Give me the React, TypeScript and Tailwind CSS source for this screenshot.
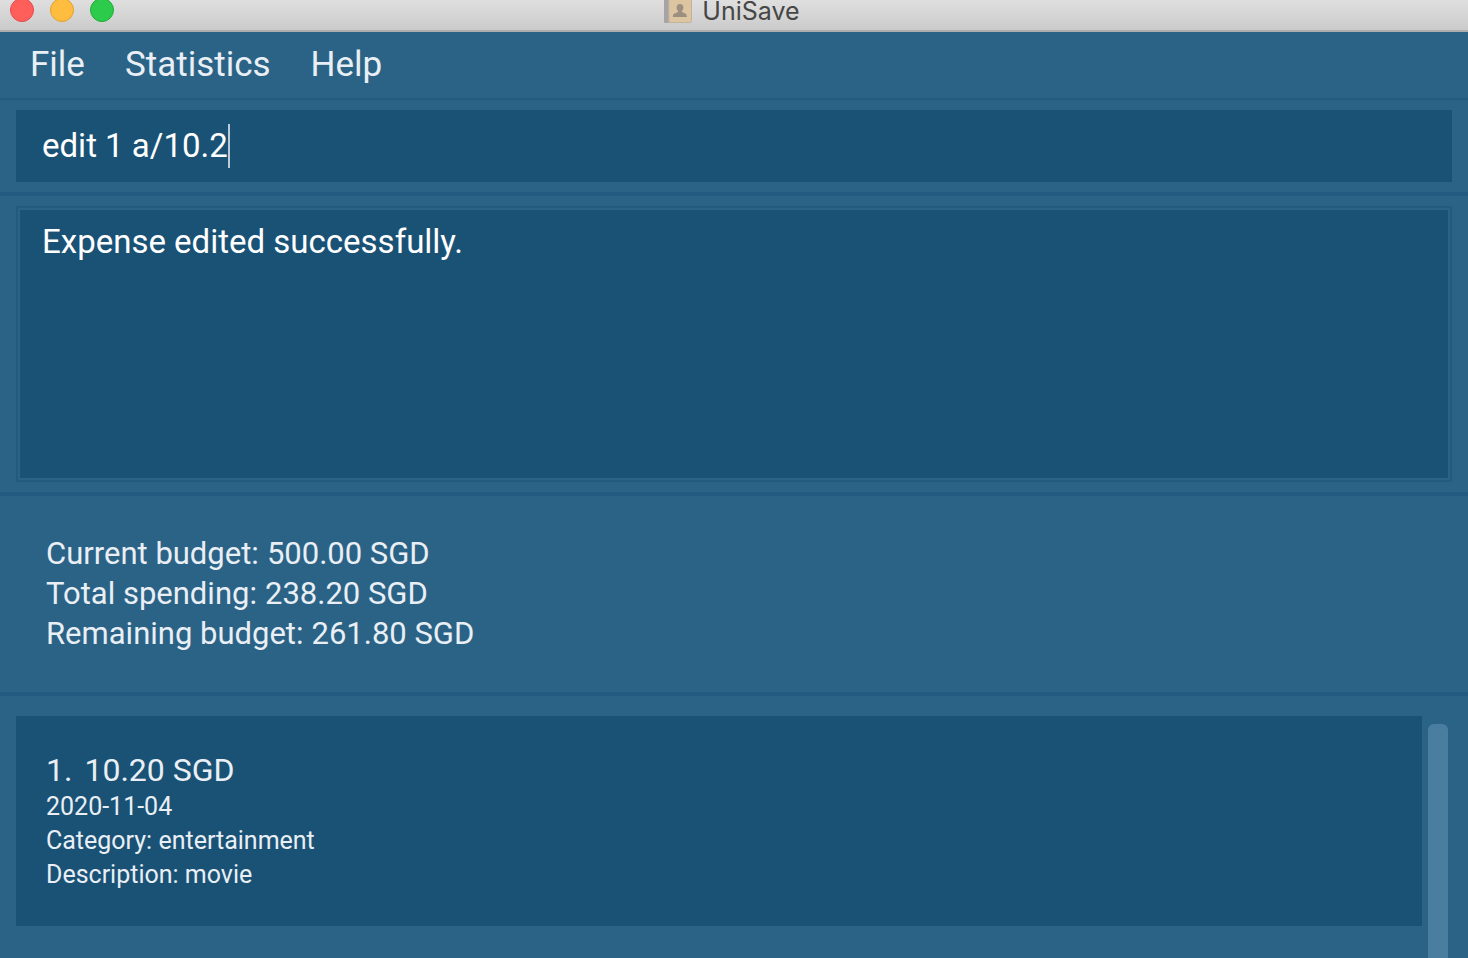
import React, { useState } from "react";

const MENUS = ["File", "Statistics", "Help"];

const BUDGET = [
  { label: "Current budget", amount: "500.00 SGD" },
  { label: "Total spending", amount: "238.20 SGD" },
  { label: "Remaining budget", amount: "261.80 SGD" },
];

const EXPENSES = [
  {
    amount: "10.20 SGD",
    date: "2020-11-04",
    category: "entertainment",
    description: "movie",
  },
];

function AddressBookIcon() {
  return (
    <svg viewBox="0 0 28 24" className="h-6 w-7" aria-hidden="true">
      <rect x="0.5" y="-6" width="27" height="28.500" rx="1.5" fill="#dcc5a0" stroke="#c2b39b" />
      <rect x="0" y="-6" width="5" height="29" rx="1" fill="#a8a3a3" />
      <rect x="4.5" y="-6" width="1" height="28.500" fill="#c4b8a8" />
      <path
        d="M16 4c-2.200 0-3.400 1.600-3.400 3.600 0 1.500.6 2.700 1.500 3.500 0 1-.5 1.300-1.700 1.700C10.400 13.400 9 13.900 8.800 17h14.200c-.2-3.100-1.600-3.600-3.400-4.200-1.200-.4-1.700-.7-1.700-1.700.9-.8 1.500-2 1.500-3.500C19.400 5.600 18.200 4 16 4z"
        fill="#9d8f7f"
      />
    </svg>
  );
}

function TitleBar() {
  return (
    <header className="relative flex h-8 items-start justify-center border-b-2 border-[#aeaeae] bg-linear-to-b from-[#dfdfdf] to-[#cbcbcb]">
      <div className="absolute -top-0.5 left-2.5 flex gap-4">
        <button aria-label="Close" className="size-6 rounded-full border border-[#e8484a] bg-[#ff5f5b]" />
        <button aria-label="Minimize" className="size-6 rounded-full border border-[#e2a02f] bg-[#ffbd3f]" />
        <button aria-label="Zoom" className="size-6 rounded-full border border-[#1fac35] bg-[#2ccb4b]" />
      </div>
      <div className="flex items-start gap-2.5 pr-1">
        <AddressBookIcon />
        <h1 className="font-['Inter','Liberation_Sans',sans-serif] text-[25px] leading-[22px] text-[#464646]">UniSave</h1>
      </div>
    </header>
  );
}

function CommandBox() {
  const [command, setCommand] = useState("edit 1 a/10.2");
  return (
    <div className="border-b-4 border-[#235a80] px-4 py-2.5">
      <label className="flex h-18 items-center bg-[#1a5276] pl-[26px]">
        <input
          aria-label="Command"
          value={command}
          onChange={(e) => setCommand(e.target.value)}
          className="field-sizing-content bg-transparent text-[33px] leading-11 text-white caret-transparent outline-none"
        />
        <span className="h-11 w-0.5 bg-[#b9cbd7]" />
      </label>
    </div>
  );
}

export default function App() {
  return (
    <div className="flex h-screen flex-col overflow-hidden bg-[#2b6387] font-['Roboto','Liberation_Sans',sans-serif] text-[#e9eff4]">
      <TitleBar />
      <nav className="flex h-17 shrink-0 items-center gap-10 border-b-2 border-[#235a80] px-[30px]">
        {MENUS.map((name) => (
          <button key={name} className="text-[35px] leading-11">
            {name}
          </button>
        ))}
      </nav>
      <CommandBox />
      <div className="border-b-4 border-[#235a80] px-4 py-2.5">
        <div className="border-2 border-[#245a7f] p-0.5">
          <textarea
            readOnly
            aria-label="Result"
            value="Expense edited successfully."
            className="block h-67 w-full resize-none bg-[#1a5276] px-[22px] py-2.5 text-[33px] leading-11 text-white outline-none"
          />
        </div>
      </div>
      <dl className="border-b-4 border-[#235a80] px-[46px] py-[38px] text-[31px] leading-10">
        {BUDGET.map((row) => (
          <div key={row.label} className="flex gap-2">
            <dt>{row.label}:</dt>
            <dd>{row.amount}</dd>
          </div>
        ))}
      </dl>
      <main className="flex min-h-0 flex-1 gap-1.5 pt-5 pr-5 pl-4">
        <ol className="flex-1">
          {EXPENSES.map((expense, i) => (
            <li key={expense.date} className="bg-[#1a5276] px-[30px] py-[34px] text-[25px] leading-[34px]">
              <h2 className="flex gap-3 text-[32px] leading-10">
                <span>{i + 1}.</span>
                <span>{expense.amount}</span>
              </h2>
              <p>{expense.date}</p>
              <p>Category: {expense.category}</p>
              <p>Description: {expense.description}</p>
            </li>
          ))}
        </ol>
        <div className="mt-2 w-5 rounded-t-md bg-[#4a7ea1]" />
      </main>
    </div>
  );
}
